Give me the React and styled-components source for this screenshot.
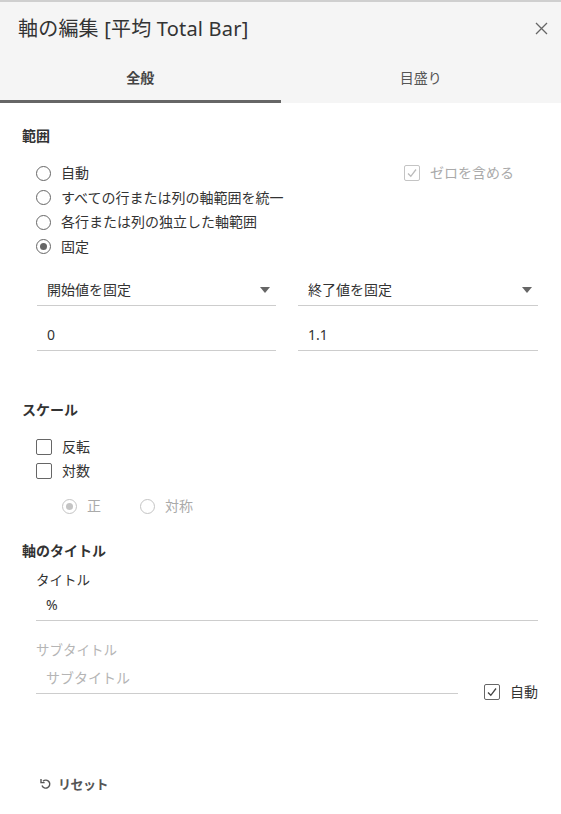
import React from 'react';
import styled, { createGlobalStyle } from 'styled-components';

const GlobalStyle = createGlobalStyle`
  html, body { margin: 0; padding: 0; background: #fff; }
  body {
    font-family: "Noto Sans", "Noto Sans CJK JP", sans-serif;
    color: #333;
  }
`;

const Dialog = styled.div`
  width: 561px;
  height: 814px;
  display: flex;
  flex-direction: column;
  border-top: 2px solid #cfcfcf;
  box-sizing: border-box;
  background: #fff;
`;

const Header = styled.div`
  background: #f5f5f5;
  display: flex;
  flex-direction: column;
`;

const TitleRow = styled.div`
  height: 56px;
  box-sizing: border-box;
  display: flex;
  align-items: center;
  justify-content: space-between;
  padding: 0 12px 3px 18px;
`;

const Title = styled.h1`
  margin: 0;
  font-size: 20px;
  font-weight: 400;
  line-height: 28px;
  letter-spacing: 0.2px;
  color: #333;
`;

const CloseBtn = styled.button`
  border: none;
  background: none;
  padding: 0;
  width: 14px;
  height: 14px;
  display: flex;
  color: #666;
`;

const Tabs = styled.div`
  display: flex;
  height: 45px;
`;

const Tab = styled.div`
  flex: 1;
  display: flex;
  align-items: center;
  justify-content: center;
  font-size: 14px;
  line-height: 20px;
  padding-bottom: 2px;
  box-sizing: border-box;
  font-weight: ${(p) => (p.$active ? 700 : 400)};
  color: ${(p) => (p.$active ? '#444' : '#555')};
  border-bottom: 3px solid ${(p) => (p.$active ? '#666' : 'transparent')};
`;

const Body = styled.div`
  flex: 1;
  padding: 23px 23px 0 22px;
  display: flex;
  flex-direction: column;
`;

const Heading = styled.h2`
  margin: ${(p) => p.$top || 0}px 0 0;
  font-size: 14px;
  font-weight: 700;
  line-height: 20px;
  color: #333;
`;

const OptionList = styled.div`
  display: flex;
  flex-direction: column;
  margin: ${(p) => p.$top || 0}px ${(p) => p.$right || 0}px 0 ${(p) => p.$left ?? 14}px;
`;

const RangeRow = styled.div`
  display: flex;
  justify-content: space-between;
  align-items: flex-start;
`;

const Option = styled.label`
  display: flex;
  align-items: center;
  height: ${(p) => p.$h || 24.5}px;
  gap: 10px;
  font-size: 14px;
  line-height: 20px;
  color: ${(p) => (p.$disabled ? '#aaa' : '#333')};
`;

const InlineOptions = styled.div`
  display: flex;
  gap: 39px;
  margin: 11px 0 0 40px;
`;

const RadioCircle = styled.span`
  width: 15px;
  height: 15px;
  box-sizing: border-box;
  border-radius: 50%;
  border: 1px solid ${(p) => (p.$disabled ? '#c4c4c4' : '#666')};
  display: flex;
  align-items: center;
  justify-content: center;
  flex-shrink: 0;
  &::after {
    content: '';
    width: 7px;
    height: 7px;
    border-radius: 50%;
    background: ${(p) => (p.$checked ? (p.$disabled ? '#c4c4c4' : '#666') : 'transparent')};
  }
`;

const Box = styled.span`
  width: 16px;
  height: 16px;
  box-sizing: border-box;
  border: 1px solid ${(p) => (p.$disabled ? '#c4c4c4' : '#666')};
  border-radius: 2px;
  display: flex;
  align-items: center;
  justify-content: center;
  flex-shrink: 0;
  color: ${(p) => (p.$disabled ? '#bbb' : '#444')};
`;

const Radio = ({ checked, disabled, children }) => (
  <Option $disabled={disabled}>
    <RadioCircle $checked={checked} $disabled={disabled} />
    {children}
  </Option>
);

const Checkbox = ({ checked, disabled, children, h }) => (
  <Option $disabled={disabled} $h={h}>
    <Box $disabled={disabled}>
      {checked && (
        <svg width="12" height="12" viewBox="0 0 12 12" fill="none">
          <path d="M2 6.5 L4.8 9.3 L10 2.5" stroke="currentColor" strokeWidth="1.3" />
        </svg>
      )}
    </Box>
    {children}
  </Option>
);

const FieldGrid = styled.div`
  display: grid;
  grid-template-columns: 239px 240px;
  column-gap: 22px;
  row-gap: 14px;
  margin: ${(p) => p.$top || 0}px 0 0 15px;
`;

const Field = styled.div`
  height: 31px;
  box-sizing: border-box;
  border-bottom: 1px solid #cdcdcd;
  display: flex;
  align-items: center;
  justify-content: space-between;
  padding: 0 6px 0 10px;
  font-size: 14px;
  line-height: 20px;
  color: ${(p) => (p.$placeholder ? '#b5b5b5' : '#333')};
  width: ${(p) => (p.$width ? `${p.$width}px` : 'auto')};
`;

const Caret = styled.span`
  width: 0;
  height: 0;
  border-left: 5px solid transparent;
  border-right: 5px solid transparent;
  border-top: 6px solid #666;
`;

const TitleBlock = styled.div`
  display: flex;
  flex-direction: column;
  margin-left: 14px;
`;

const FieldLabel = styled.div`
  font-size: 13.5px;
  line-height: 20px;
  margin-top: ${(p) => p.$top || 0}px;
  color: ${(p) => (p.$disabled ? '#b5b5b5' : '#333')};
`;

const SubtitleRow = styled.div`
  display: flex;
  align-items: flex-end;
  justify-content: space-between;
  margin-top: 3px;
`;

const AutoToggle = styled.div`
  margin-bottom: -11px;
`;

const Reset = styled.button`
  margin: auto 0 20px 18px;
  align-self: flex-start;
  border: none;
  background: none;
  padding: 0;
  display: flex;
  align-items: center;
  gap: 7px;
  font-family: inherit;
  font-size: 13px;
  font-weight: 700;
  line-height: 20px;
  letter-spacing: -0.5px;
  color: #555;
`;

export default function App() {
  return (
    <>
      <GlobalStyle />
      <Dialog>
        <Header>
          <TitleRow>
            <Title>軸の編集 [平均 Total Bar]</Title>
            <CloseBtn aria-label="close">
              <svg width="13" height="13" viewBox="0 0 13 13">
                <path d="M1 1 L12 12 M12 1 L1 12" stroke="#666" strokeWidth="1.3" />
              </svg>
            </CloseBtn>
          </TitleRow>
          <Tabs>
            <Tab $active>全般</Tab>
            <Tab>目盛り</Tab>
          </Tabs>
        </Header>
        <Body>
          <Heading>範囲</Heading>
          <RangeRow>
            <OptionList $top={15}>
              <Radio>自動</Radio>
              <Radio>すべての行または列の軸範囲を統一</Radio>
              <Radio>各行または列の独立した軸範囲</Radio>
              <Radio checked>固定</Radio>
            </OptionList>
            <OptionList $top={15} $left={0} $right={24}>
              <Checkbox checked disabled>ゼロを含める</Checkbox>
            </OptionList>
          </RangeRow>
          <FieldGrid $top={16}>
            <Field>
              開始値を固定
              <Caret />
            </Field>
            <Field>
              終了値を固定
              <Caret />
            </Field>
            <Field>0</Field>
            <Field>1.1</Field>
          </FieldGrid>

          <Heading $top={49}>スケール</Heading>
          <OptionList $top={15}>
            <Checkbox h={24}>反転</Checkbox>
            <Checkbox h={24}>対数</Checkbox>
          </OptionList>
          <InlineOptions>
            <Radio checked disabled>正</Radio>
            <Radio disabled>対称</Radio>
          </InlineOptions>

          <Heading $top={22}>軸のタイトル</Heading>
          <TitleBlock>
            <FieldLabel $top={9}>タイトル</FieldLabel>
            <Field>%</Field>
            <FieldLabel $top={19} $disabled>サブタイトル</FieldLabel>
            <SubtitleRow>
              <Field $placeholder $width={422}>サブタイトル</Field>
              <AutoToggle>
                <Checkbox checked h={26}>自動</Checkbox>
              </AutoToggle>
            </SubtitleRow>
          </TitleBlock>

          <Reset>
            <svg width="11" height="12" viewBox="0 0 11 12" fill="none">
              <path d="M3 3.2 A4 4 0 1 1 2 7.5" stroke="#555" strokeWidth="1.4" />
              <path d="M1 1 L1 4.6 L4.6 4.6" stroke="#555" strokeWidth="1.4" fill="none" />
            </svg>
            リセット
          </Reset>
        </Body>
      </Dialog>
    </>
  );
}
